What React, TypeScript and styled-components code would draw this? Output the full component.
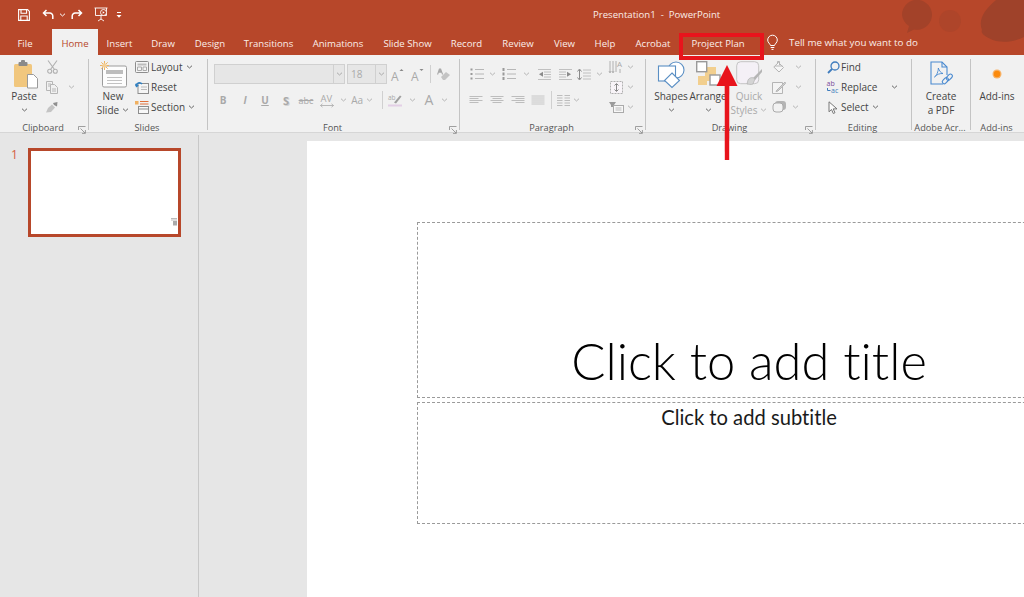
import React from "react";
import styled, { createGlobalStyle } from "styled-components";

const Global = createGlobalStyle`
  html, body { margin: 0; padding: 0; background: #e6e6e6; }
  body { font-family: "Open Sans", "Noto Sans", sans-serif; }
  svg { display: block; flex-shrink: 0; overflow: visible; }
`;

const Window = styled.div`
  position: relative; width: 1024px; height: 597px; overflow: hidden;
  display: flex; flex-direction: column; background: #e6e6e6;
`;
const Chrome = styled.header`
  position: relative; height: 55px; flex-shrink: 0; background: #b7472a; color: #fff; overflow: hidden;
`;
const Texture = styled.svg`
  position: absolute; right: 0; top: 0; pointer-events: none;
`;
const TitleBar = styled.div`
  position: relative; height: 29px; display: flex; align-items: center;
`;
const Qat = styled.div`
  width: 593px; display: flex; align-items: center; flex-shrink: 0;
`;
const QatCell = styled.div<{ $w: number }>`
  width: ${p => p.$w}px; height: 16px; display: flex; align-items: center; justify-content: center; flex-shrink: 0;
`;
const Title = styled.div`
  font-size: 9.6px; color: #fbeee9; white-space: pre;
`;
const TabBar = styled.nav`
  position: relative; height: 26px; display: flex; align-items: stretch;
`;
const Tab = styled.div<{ $w: number; $ml?: number; $active?: boolean }>`
  width: ${p => p.$w}px; margin-left: ${p => p.$ml ?? 0}px; flex-shrink: 0; display: flex; align-items: center; justify-content: center;
  font-size: 9.6px; white-space: nowrap; padding-top: 2px; box-sizing: border-box;
  background: ${p => (p.$active ? "#f1f1f1" : "transparent")};
  color: ${p => (p.$active ? "#b7472a" : "#fbeee9")};
`;
const Tell = styled.div`
  display: flex; align-items: center; gap: 11px; margin-left: 12px; font-size: 9.8px; color: #fbeee9;
`;

const Ribbon = styled.div`
  height: 78px; flex-shrink: 0; display: flex; background: #f1f1f1; border-bottom: 1px solid #d6d6d6;
  box-sizing: border-box; padding-top: 4px; color: #444; font-size: 10px;
`;
const Group = styled.section<{ $w: number; $last?: boolean }>`
  width: ${p => p.$w}px; flex-shrink: 0; box-sizing: border-box; height: 71px; display: flex; flex-direction: column;
  border-right: ${p => (p.$last ? "0" : "1px solid #c4c4c4")};
`;
const Body = styled.div<{ $pl?: number }>`
  flex: 1; min-height: 0; display: flex; align-items: flex-start; padding-left: ${p => p.$pl ?? 0}px;
`;
const GroupFoot = styled.div`
  height: 9px; display: grid; grid-template-columns: 1fr auto 1fr; align-items: center; padding-right: 2px;
`;
const GroupLabel = styled.span`
  grid-column: 2; font-size: 9.2px; line-height: 12px; color: #555; white-space: nowrap; position: relative; top: 1px;
`;
const Launcher = styled.span`
  grid-column: 3; justify-self: end; position: relative; top: 3px;
`;
const BigBtn = styled.div<{ $w: number; $ml?: number; $off?: boolean }>`
  width: ${p => p.$w}px; margin-left: ${p => p.$ml ?? 0}px; flex-shrink: 0; display: flex; flex-direction: column; align-items: center;
  color: ${p => (p.$off ? "#a9a9a9" : "#444")};
`;
const BigIcon = styled.div<{ $pl?: number }>`
  height: 30px; display: flex; align-items: center; justify-content: center; padding-left: ${p => p.$pl ?? 0}px;
`;
const BigLine = styled.div`
  height: 14px; line-height: 14px; display: flex; align-items: center; gap: 3px; white-space: nowrap; font-size: 10px;
`;
const Stack = styled.div<{ $ml?: number }>`
  display: flex; flex-direction: column; gap: 4px; margin-left: ${p => p.$ml ?? 0}px; flex-shrink: 0;
`;
const SmallRow = styled.div`
  height: 16px; display: flex; align-items: center; white-space: nowrap;
`;
const Cell = styled.div<{ $w: number; $off?: boolean }>`
  width: ${p => p.$w}px; flex-shrink: 0; display: flex; align-items: center; justify-content: center; height: 16px;
  color: ${p => (p.$off ? "#a9a9a9" : "#444")};
`;
const Caption = styled.span<{ $ml?: number }>`
  margin-left: ${p => p.$ml ?? 0}px; margin-right: 3px;
`;
const Line = styled.div<{ $ml?: number; $mt?: number }>`
  display: flex; align-items: center; height: 16px; margin-left: ${p => p.$ml ?? 0}px; margin-top: ${p => p.$mt ?? 0}px;
`;
const FieldWrap = styled.div`
  display: flex; margin-top: 5px; align-items: center;
`;
const Field = styled.div<{ $w: number; $ml?: number }>`
  width: ${p => p.$w}px; margin-left: ${p => p.$ml ?? 0}px; height: 20px; box-sizing: border-box; flex-shrink: 0;
  background: #e6e6e6; border: 1px solid #d0d0d0; display: flex; align-items: center; padding-left: 3px;
  font-size: 10px; color: #aaa;
`;
const FieldDrop = styled.div<{ $w: number }>`
  width: ${p => p.$w}px; height: 20px; box-sizing: border-box; flex-shrink: 0; background: #e6e6e6;
  border: 1px solid #d0d0d0; border-left: 0; display: flex; align-items: center; justify-content: center;
`;
const Letter = styled.span<{ $size?: number; $b?: boolean; $i?: boolean; $u?: boolean; $s?: boolean; $shadow?: boolean }>`
  font-size: ${p => p.$size ?? 10}px; font-weight: ${p => (p.$b ? 700 : 400)}; font-style: ${p => (p.$i ? "italic" : "normal")};
  text-decoration: ${p => (p.$u ? "underline" : p.$s ? "line-through" : "none")}; color: #a9a9a9; line-height: 1;
  text-shadow: ${p => (p.$shadow ? "1px 1px 0 #d4d4d4" : "none")};
`;
const Sep = styled.div<{ $w: number }>`
  width: ${p => p.$w}px; height: 18px; flex-shrink: 0; display: flex; justify-content: center;
  &::before { content: ""; width: 1px; background: #d0d0d0; }
`;

const Workspace = styled.main`
  flex: 1; min-height: 0; display: flex;
`;
const ThumbPane = styled.aside`
  width: 199px; flex-shrink: 0; box-sizing: border-box; border-right: 1px solid #c8c8c8; margin-top: 2px;
  display: flex; align-items: flex-start; padding: 13px 0 0 11px; gap: 13px;
`;
const ThumbNum = styled.span`
  font-size: 12px; color: #d4603f; line-height: 14px; width: 4px;
`;
const Thumb = styled.div`
  width: 153px; height: 89px; box-sizing: border-box; background: #fff; border: 3px solid #b7472a;
  display: flex; align-items: flex-end; justify-content: flex-end; padding: 0 1px 8px 0;
`;
const Stage = styled.div`
  flex: 1; min-width: 0; overflow: hidden; padding: 8px 0 0 108px;
`;
const Slide = styled.div`
  width: 900px; height: 500px; background: #fff; padding: 81px 0 0 110px; box-sizing: border-box;
`;
const Placeholder = styled.div<{ $h: number; $mt?: number; $end?: boolean }>`
  width: 664px; height: ${p => p.$h}px; margin-top: ${p => p.$mt ?? 0}px; box-sizing: border-box;
  border: 1px dashed #9a9a9a; display: flex; justify-content: center;
  align-items: ${p => (p.$end ? "flex-end" : "flex-start")};
  color: #000; font-family: "Lato", sans-serif; white-space: nowrap; font-variant-ligatures: none;
`;
const TitleText = styled.div`
  font-size: 50.7px; font-weight: 300; line-height: 60px; margin-bottom: 6px;
`;
const SubText = styled.div`
  font-size: 20.2px; line-height: 28px; color: #1a1a1a;
`;

const Mark = styled.div`
  position: absolute; left: 679px; top: 33px; width: 85px; height: 27px; box-sizing: border-box;
  border: 4px solid #e8141c; pointer-events: none;
`;
const Arrow = styled.svg`
  position: absolute; left: 712px; top: 62px; pointer-events: none;
`;

const G = "#b0b0b0";
const Chev = ({ c = "#666" }: { c?: string }) => (
  <svg width="7" height="4" viewBox="0 0 7 4"><path d="M1 .7 3.5 3 6 .7" fill="none" stroke={c} strokeWidth="1" /></svg>
);
const Launch = () => (
  <svg width="8" height="8" viewBox="0 0 8 8" fill="none" stroke="#8a8a8a" strokeWidth=".8">
    <path d="M.5 4V.5H7.5M2.5 2.5 7 7M4 7.4h3.4V4" />
  </svg>
);
const Lines = ({ kind }: { kind: "l" | "c" | "r" | "j" }) => {
  const rows = kind === "j" ? [0, 1, 2, 3, 4] : [1, 2, 3, 4];
  return (
    <svg width="14" height="10" viewBox="0 0 14 10" stroke={kind === "j" ? "#bdbdbd" : G} strokeWidth=".8">
      {rows.map(i => {
        const short = i % 2 === 0 && kind !== "j" ? 9 : 13;
        const x = kind === "l" || kind === "j" ? .5 : kind === "c" ? (14 - short) / 2 : 13.5 - short;
        const y = kind === "j" ? i * 2 + 1 : i * 2 - .5;
        return <line key={i} x1={x} x2={x + short} y1={y} y2={y} />;
      })}
    </svg>
  );
};
const ListIcon = ({ num }: { num?: boolean }) => (
  <svg width="14" height="12" viewBox="0 0 14 12" stroke={G} strokeWidth=".9">
    {[1.5, 6, 10.5].map(y => (
      <g key={y}>
        <rect x=".5" y={y - (num ? 1.5 : 1)} width="2" height={num ? 3 : 2} fill="#9a9a9a" stroke="none" />
        <line x1="5" x2="14" y1={y} y2={y} />
      </g>
    ))}
  </svg>
);
const Indent = ({ flip }: { flip?: boolean }) => (
  <svg width="13" height="11" viewBox="0 0 13 11" stroke="#c0c0c0" style={flip ? { transform: "scaleX(-1)" } : undefined}>
    {[.5, 3, 5.5, 8, 10.5].map(y => <line key={y} x1={y === .5 || y === 10.5 ? 0 : 6} x2="13" y1={y} y2={y} />)}
    <path d="M5 2.8v5L1 5.3z" fill="#8a8a8a" stroke="none" />
  </svg>
);
const Save = () => (
  <svg width="12" height="12" viewBox="0 0 12 12" fill="none" stroke="#fff" strokeWidth="1.1">
    <path d="M.6.6h9l1.8 1.8v9H.6z" /><path d="M3 .8v3.4h5.6V.8M2.8 11.2V7h6.4v4.2" />
  </svg>
);
const Undo = ({ flip }: { flip?: boolean }) => (
  <svg width="12" height="11" viewBox="0 0 12 11" fill="none" stroke="#fff" strokeWidth="1.5" style={flip ? { transform: "scaleX(-1)" } : undefined}>
    <path d="M4.5 1 1.5 4l3 3M1.8 4h6a3 3 0 0 1 3 3.2V10" />
  </svg>
);
const Present = () => (
  <svg width="15" height="15" viewBox="0 0 15 15" fill="none" stroke="#fff" strokeWidth=".9">
    <path d="M.5 1h13M1.5 1v7.500h11V1M7 9v3M4 14l3-2 3 2" />
    <circle cx="9.500" cy="5.500" r="3" fill="#b7472a" /><path d="M8.700 4.200v2.600l2-1.300z" fill="#fff" stroke="none" />
  </svg>
);
const QatMore = () => (
  <svg width="6" height="6" viewBox="0 0 6 6" fill="#fff"><rect x="1" y="0" width="4" height="1" /><path d="M.5 3h5L3 5.800z" /></svg>
);
const Paste = () => (
  <svg width="24" height="29" viewBox="0 0 24 29">
    <rect x="0" y="4" width="18" height="23" rx="1.500" fill="#f1c77e" />
    <rect x="4.500" y="2" width="9" height="4" rx="1" fill="#8a8a8a" /><rect x="7" y="0" width="4" height="3" rx="1" fill="#8a8a8a" />
    <path d="M13.500 14.500h6l4 4v9.500h-10z" fill="#fff" stroke="#9a9a9a" />
  </svg>
);
const Scissors = () => (
  <svg width="11" height="14" viewBox="0 0 11 14" fill="none" stroke="#b0b0b0" strokeWidth="1.1">
    <path d="M1 .5 7.500 9.500M10 .5 3.500 9.500" /><circle cx="2.700" cy="11.300" r="2" /><circle cx="8.300" cy="11.300" r="2" />
  </svg>
);
const Copy = () => (
  <svg width="12" height="13" viewBox="0 0 12 13" fill="#f1f1f1" stroke="#b6b6b6">
    <path d="M.5.500h6v9h-6z" /><path d="M4.500 3.500h4l3 3v6h-7z" /><path d="M2 3h3M2 5h2M6 8h4M6 10h4" fill="none" />
  </svg>
);
const Brush = () => (
  <svg width="12" height="11" viewBox="0 0 12 11">
    <path d="M7 1 11.500 0 11 4.500 8 3z" fill="#8f8f8f" /><path d="M6 2.500 9 5.500 5 10 0 10.500 2 6z" fill="#c4c4c4" />
  </svg>
);
const NewSlide = () => (
  <svg width="27" height="27" viewBox="0 0 27 27">
    <rect x="2.500" y="5" width="24" height="21" rx="1.500" fill="#fdfdfd" stroke="#9c9c9c" />
    <rect x="6" y="9" width="17" height="4" fill="#bdbdbd" /><path d="M7 16.500h15M7 19.500h15M7 22.500h15" stroke="#c2c2c2" />
    <g stroke="#eeb463" strokeWidth="1"><path d="M4.500 0v9M0 4.500h9M1.300 1.300l6.400 6.400M7.700 1.300 1.300 7.700" /></g>
    <circle cx="4.500" cy="4.500" r="2.200" fill="#f4cf96" />
  </svg>
);
const LayoutIco = () => (
  <svg width="14" height="12" viewBox="0 0 14 12" fill="none" stroke="#8d8d8d">
    <rect x=".5" y=".5" width="13" height="11" rx="1" fill="#f5f5f5" /><rect x="2.500" y="2.500" width="9" height="2" fill="#bdbdbd" stroke="none" />
    <path d="M2.500 6h4v3.500h-4zM8 6h3.500v3.500H8z" stroke="#aaa" />
  </svg>
);
const ResetIco = () => (
  <svg width="14" height="13" viewBox="0 0 14 13" fill="none">
    <rect x="3" y="2.500" width="10.500" height="10" fill="#f5f5f5" stroke="#8d8d8d" /><path d="M6 6h6M6 8.500h6" stroke="#bbb" />
    <path d="M1 5c.5-3 4-4.500 6-2" stroke="#2f7fc1" strokeWidth="1.500" /><path d="M0 2.500 1 6.500 4 4.800z" fill="#2f7fc1" />
  </svg>
);
const SectionIco = () => (
  <svg width="14" height="14" viewBox="0 0 14 14" fill="none">
    <rect x="0" y="1" width="3.500" height="3.500" fill="#f0b060" /><path d="M5 1.500h8.500M5 4h8.500" stroke="#e0703a" />
    <rect x="3.500" y="6.500" width="10" height="7" fill="#f8f8f8" stroke="#8d8d8d" /><path d="M3.500 9h10" stroke="#8d8d8d" />
  </svg>
);
const Eraser = () => (
  <svg width="13" height="13" viewBox="0 0 13 13">
    <path d="M2 .5h2l2.200 6H5l-.6-1.800H1.800L1.200 6.500H0z" fill="#a9a9a9" /><path d="M4 9l5-5 4 3-5 5H6z" fill="#c4c4c4" />
  </svg>
);
const GrowA = ({ down }: { down?: boolean }) => (
  <svg width="13" height="13" viewBox="0 0 13 13">
    <text x="0" y="12.500" fontSize="12" fontFamily="Open Sans, sans-serif" fill="#a9a9a9">A</text>
    <path d={down ? "M8.500 1h4L10.500 3z" : "M8.500 3h4L10.500 1z"} fill="#888" />
  </svg>
);
const AvIcon = () => (
  <svg width="14" height="15" viewBox="0 0 14 15">
    <text x="0.500" y="9" fontSize="9.500" fontFamily="Open Sans, sans-serif" fill="#a9a9a9">AV</text>
    <path d="M.5 12.500h13M2.500 10.800.5 12.500l2 1.700M11.500 10.800l2 1.700-2 1.700" stroke="#a9a9a9" strokeWidth=".8" fill="none" />
  </svg>
);
const Highlight = () => (
  <svg width="14" height="14" viewBox="0 0 14 14">
    <text x="0" y="6.500" fontSize="6.500" fontFamily="Open Sans, sans-serif" fill="#a9a9a9">ab</text>
    <path d="M6 9.500 12 2.500l1.500 1L8 10.500z" fill="#a0a0a0" /><rect x="0" y="11.500" width="14" height="2" fill="#e3cfe6" />
  </svg>
);
const LineSpace = () => (
  <svg width="14" height="13" viewBox="0 0 14 13" stroke="#c0c0c0" fill="none">
    <path d="M6 2h8M6 5h8M6 8h8M6 11h8" /><path d="M2.500 2v9M.5 3.500l2-2.500 2 2.500M.5 9.500l2 2.500 2-2.500" stroke="#8a8a8a" />
  </svg>
);
const Cols = () => (
  <svg width="13" height="11" viewBox="0 0 13 11" stroke="#bdbdbd">
    {[.5, 3, 5.500, 8, 10.500].map(y => <g key={y}><line x1="0" x2="5.500" y1={y} y2={y} /><line x1="7.500" x2="13" y1={y} y2={y} /></g>)}
  </svg>
);
const TextDir = () => (
  <svg width="14" height="15" viewBox="0 0 14 15" stroke={G} fill="none">
    <path d="M1 1v11M4 1v11M11 9v4M.0 11l1 2 1-2M3 11l1 2 1-2M7 1v11" />
    <text x="8" y="7" fontSize="8" stroke="none" fill="#a9a9a9" fontFamily="Open Sans, sans-serif">A</text>
  </svg>
);
const TextAlign = () => (
  <svg width="13" height="13" viewBox="0 0 13 13" stroke={G} fill="none">
    <rect x=".5" y=".5" width="12" height="12" strokeDasharray="2 1" fill="#f8f4f8" /><path d="M6.500 3v7" stroke="#888" /><path d="M4.500 4.500l2-2 2 2M4.500 8.500l2 2 2-2" stroke="#888" />
  </svg>
);
const SmartArt = () => (
  <svg width="15" height="11" viewBox="0 0 15 11">
    <path d="M0 0h7l-2 3H5v2H2V3z" fill="#9a9a9a" /><rect x="4.500" y="3.500" width="10" height="7" fill="#f7f7f7" stroke="#aaa" />
    <path d="M6.500 6h6M6.500 8h6" stroke="#bbb" />
  </svg>
);
const Shapes = () => (
  <svg width="27" height="27" viewBox="0 0 27 27" fill="#fff" stroke="#5a8fc4" strokeWidth="1.100">
    <circle cx="18" cy="9" r="8" /><rect x=".5" y="5" width="17" height="15" /><path d="M14 12l7.500 7.500L14 26.500 6.500 19.500z" />
  </svg>
);
const Arrange = () => (
  <svg width="25" height="26" viewBox="0 0 25 26">
    <rect x="9" y="6" width="11" height="14" fill="#f2cf8e" /><rect x="2" y="15" width="9" height="9" fill="#f2cf8e" />
    <rect x=".7" y=".7" width="10" height="10" fill="#fff" stroke="#9a9a9a" strokeWidth="1.400" />
    <rect x="14" y="14" width="10" height="10" fill="#fff" stroke="#9a9a9a" strokeWidth="1.400" />
  </svg>
);
const Quick = () => (
  <svg width="27" height="27" viewBox="0 0 27 27">
    <rect x=".7" y=".7" width="22" height="22" rx="4" fill="#f4f0f6" stroke="#c4c4c4" />
    <path d="M17 17 26 8v3l-7 8z" fill="#b5b5b5" /><path d="M12 19c2-3 5-3 7-1l-2 5c-2 1-5 0-6 0z" fill="#d4d4d4" stroke="#aaa" strokeWidth=".6" />
  </svg>
);
const Bucket = () => (
  <svg width="12" height="12" viewBox="0 0 12 12" fill="#f6f6f6" stroke="#b5b5b5">
    <path d="M.8 6 5.500 1.500 10.500 6.500 6 11z" /><path d="M2 5h7.500" /><path d="M4.500 3V.5h2V4" fill="none" />
  </svg>
);
const Pen = () => (
  <svg width="14" height="13" viewBox="0 0 14 13" fill="#f4f4f4" stroke="#b5b5b5"><path d="M.5 1.500h10v11H.5z" /><path d="M5 9l8-8 .5 1.500-7.500 7.500-2 .5z" fill="#d0d0d0" /></svg>
);
const Effect = () => (
  <svg width="13" height="12" viewBox="0 0 13 12"><rect x="2" y="0" width="11" height="9" rx="3" fill="#b4b4b4" /><rect x="0" y="2" width="10" height="9" rx="3" fill="#f2f2f2" stroke="#aaa" /></svg>
);
const Find = () => (
  <svg width="13" height="13" viewBox="0 0 13 13" fill="none" stroke="#3f7cbd" strokeWidth="1.300"><circle cx="8" cy="5" r="4" /><path d="M5 8 1 12" strokeWidth="1.800" /></svg>
);
const Replace = () => (
  <svg width="14" height="14" viewBox="0 0 14 14" fontFamily="Open Sans, sans-serif">
    <text x="0.500" y="6" fontSize="7" fill="#7a4b9a">ab</text>
    <text x="5" y="13" fontSize="7" fill="#3f7cbd">ac</text>
    <path d="M1.500 8v2.500h3" fill="none" stroke="#3f7cbd" />
  </svg>
);
const Select = () => (
  <svg width="10" height="13" viewBox="0 0 10 13" fill="#fbfbfb" stroke="#777"><path d="M1 .8v10l2.500-2.300 1.800 4 1.700-.8-1.800-3.800H9z" /></svg>
);
const Pdf = () => (
  <svg width="24" height="26" viewBox="0 0 24 26" fill="none" stroke="#4a8ad0" strokeWidth="1.100">
    <path d="M14 23H2V1h11l5 5v8" /><path d="M13 1v5h5" />
    <path d="M5.500 16c2-1 4-6 3.800-9 1 3 2.500 4.800 4.700 5.500-3-.2-6.500.9-8.500 3.500z" strokeWidth=".9" />
    <rect x="13" y="18" width="7" height="4" rx="2" transform="rotate(-45 16 20)" /><rect x="17" y="14.500" width="7" height="4" rx="2" transform="rotate(-45 20 16.500)" />
  </svg>
);
const Bulb = () => (
  <svg width="11" height="15" viewBox="0 0 11 15" fill="none" stroke="#fff" strokeWidth="1"><path d="M3.500 10.500C3 8.500.7 7.800.7 5a4.800 4.800 0 0 1 9.600 0c0 2.800-2.300 3.500-2.800 5.500zM3.700 12.500h3.600M4.500 14.400h2" /></svg>
);

const tabs: [string, number][] = [
  ["Insert", 43], ["Draw", 44], ["Design", 50], ["Transitions", 67], ["Animations", 72], ["Slide Show", 67],
  ["Record", 51], ["Review", 52], ["View", 41], ["Help", 40], ["Acrobat", 56], ["Project Plan", 74],
];

export default function App() {
  return (
    <Window>
      <Global />
      <Chrome>
        <Texture width="140" height="55" viewBox="0 0 140 55">
          <path d="M18 15a15 15 0 1 1 12 14.500L23 33l2-7a15 15 0 0 1-7-11z" fill="#a34229" />
          <circle cx="66" cy="21" r="11" fill="#ae452a" />
          <path d="M112 0C100 10 94 20 98 30c-2 3 4 8 14 11 10 2 20 0 28-4V0z" fill="#9f422a" />
        </Texture>
        <TitleBar>
          <Qat>
            <QatCell $w={18} />
            <QatCell $w={12}><Save /></QatCell>
            <QatCell $w={12} />
            <QatCell $w={12}><Undo /></QatCell>
            <QatCell $w={16}><Chev c="#fff" /></QatCell>
            <QatCell $w={14}><Undo flip /></QatCell>
            <QatCell $w={10} />
            <QatCell $w={14}><Present /></QatCell>
            <QatCell $w={22}><QatMore /></QatCell>
          </Qat>
          <Title>Presentation1  -  PowerPoint</Title>
        </TitleBar>
        <TabBar>
          <Tab $w={50}>File</Tab>
          <Tab $w={46} $ml={2} $active>Home</Tab>
          {tabs.map(([t, w]) => <Tab key={t} $w={w}>{t}</Tab>)}
          <Tell><Bulb />Tell me what you want to do</Tell>
        </TabBar>
      </Chrome>

      <Ribbon>
        <Group $w={89}>
          <Body $pl={6}>
            <BigBtn $w={36}>
              <BigIcon $pl={4}><Paste /></BigIcon>
              <BigLine>Paste</BigLine>
              <BigLine><Chev /></BigLine>
            </BigBtn>
            <Stack $ml={4}>
              <SmallRow><Cell $w={12}><Scissors /></Cell></SmallRow>
              <SmallRow><Cell $w={12}><Copy /></Cell><Cell $w={26}><Chev c="#b5b5b5" /></Cell></SmallRow>
              <SmallRow><Cell $w={12}><Brush /></Cell></SmallRow>
            </Stack>
          </Body>
          <GroupFoot><GroupLabel>Clipboard</GroupLabel><Launcher><Launch /></Launcher></GroupFoot>
        </Group>

        <Group $w={119}>
          <Body $pl={6}>
            <BigBtn $w={36}>
              <BigIcon><NewSlide /></BigIcon>
              <BigLine>New</BigLine>
              <BigLine>Slide <Chev /></BigLine>
            </BigBtn>
            <Stack $ml={3}>
              <SmallRow><Cell $w={16}><LayoutIco /></Cell><Caption $ml={1}>Layout</Caption><Chev /></SmallRow>
              <SmallRow><Cell $w={16}><ResetIco /></Cell><Caption $ml={1}>Reset</Caption></SmallRow>
              <SmallRow><Cell $w={16}><SectionIco /></Cell><Caption $ml={1}>Section</Caption><Chev /></SmallRow>
            </Stack>
          </Body>
          <GroupFoot><GroupLabel>Slides</GroupLabel></GroupFoot>
        </Group>

        <Group $w={252}>
          <Body $pl={6}>
            <div>
              <FieldWrap>
                <Field $w={120} />
                <FieldDrop $w={11}><Chev c="#aaa" /></FieldDrop>
                <Field $w={29} $ml={2}>18</Field>
                <FieldDrop $w={11}><Chev c="#aaa" /></FieldDrop>
                <Cell $w={20}><GrowA /></Cell>
                <Cell $w={20}><GrowA down /></Cell>
                <Sep $w={6} />
                <Cell $w={20}><Eraser /></Cell>
              </FieldWrap>
              <Line $mt={8}>
                <Cell $w={18}><Letter $b>B</Letter></Cell>
                <Cell $w={26}><Letter $i $b>I</Letter></Cell>
                <Cell $w={14}><Letter $u $b>U</Letter></Cell>
                <Cell $w={28}><Letter $b $size={11} $shadow>S</Letter></Cell>
                <Cell $w={12}><Letter $s $size={9}>abc</Letter></Cell>
                <Cell $w={30}><AvIcon /></Cell>
                <Cell $w={2}><Chev c="#b5b5b5" /></Cell>
                <Cell $w={36} $off><Letter>Aa</Letter>&nbsp;<Chev c="#b5b5b5" /></Cell>
                <Sep $w={4} />
                <Cell $w={22}><Highlight /></Cell>
                <Cell $w={12}><Chev c="#b5b5b5" /></Cell>
                <Cell $w={22}><Letter $size={14}>A</Letter></Cell>
                <Cell $w={8}><Chev c="#b5b5b5" /></Cell>
              </Line>
            </div>
          </Body>
          <GroupFoot><GroupLabel>Font</GroupLabel><Launcher><Launch /></Launcher></GroupFoot>
        </Group>

        <Group $w={186}>
          <Body>
            <div>
              <Line $ml={8} $mt={7}>
                <Cell $w={18}><ListIcon /></Cell>
                <Cell $w={12}><Chev c="#b5b5b5" /></Cell>
                <Cell $w={22}><ListIcon num /></Cell>
                <Cell $w={12}><Chev c="#b5b5b5" /></Cell>
                <Cell $w={24}><Indent /></Cell>
                <Cell $w={18}><Indent flip /></Cell>
                <Cell $w={20}><LineSpace /></Cell>
                <Cell $w={10}><Chev c="#b5b5b5" /></Cell>
              </Line>
              <Line $ml={6} $mt={10}>
                <Cell $w={20}><Lines kind="l" /></Cell>
                <Cell $w={21}><Lines kind="c" /></Cell>
                <Cell $w={21}><Lines kind="r" /></Cell>
                <Cell $w={20}><Lines kind="j" /></Cell>
                <Sep $w={6} />
                <Cell $w={18}><Cols /></Cell>
                <Cell $w={8}><Chev c="#b5b5b5" /></Cell>
              </Line>
            </div>
            <Stack $ml={4}>
              <SmallRow><Cell $w={16}><TextDir /></Cell><Cell $w={12}><Chev c="#b5b5b5" /></Cell></SmallRow>
              <SmallRow><Cell $w={16}><TextAlign /></Cell><Cell $w={12}><Chev c="#b5b5b5" /></Cell></SmallRow>
              <SmallRow><Cell $w={16}><SmartArt /></Cell><Cell $w={12}><Chev c="#b5b5b5" /></Cell></SmallRow>
            </Stack>
          </Body>
          <GroupFoot><GroupLabel>Paragraph</GroupLabel><Launcher><Launch /></Launcher></GroupFoot>
        </Group>

        <Group $w={170}>
          <Body $pl={8}>
            <BigBtn $w={34}>
              <BigIcon><Shapes /></BigIcon>
              <BigLine>Shapes</BigLine>
              <BigLine><Chev /></BigLine>
            </BigBtn>
            <BigBtn $w={36} $ml={2}>
              <BigIcon><Arrange /></BigIcon>
              <BigLine>Arrange</BigLine>
              <BigLine><Chev /></BigLine>
            </BigBtn>
            <BigBtn $w={38} $ml={4} $off>
              <BigIcon><Quick /></BigIcon>
              <BigLine>Quick</BigLine>
              <BigLine>Styles <Chev c="#b5b5b5" /></BigLine>
            </BigBtn>
            <Stack>
              <SmallRow><Cell $w={22}><Bucket /></Cell><Cell $w={16}><Chev c="#b5b5b5" /></Cell></SmallRow>
              <SmallRow><Cell $w={22}><Pen /></Cell><Cell $w={16}><Chev c="#b5b5b5" /></Cell></SmallRow>
              <SmallRow><Cell $w={22}><Effect /></Cell><Cell $w={10}><Chev c="#b5b5b5" /></Cell></SmallRow>
            </Stack>
          </Body>
          <GroupFoot><GroupLabel>Drawing</GroupLabel><Launcher><Launch /></Launcher></GroupFoot>
        </Group>

        <Group $w={96}>
          <Body $pl={9}>
            <Stack>
              <SmallRow><Cell $w={16}><Find /></Cell><Caption>Find</Caption></SmallRow>
              <SmallRow><Cell $w={16}><Replace /></Cell><Caption>Replace</Caption><Cell $w={28}><Chev /></Cell></SmallRow>
              <SmallRow><Cell $w={16}><Select /></Cell><Caption>Select</Caption><Chev /></SmallRow>
            </Stack>
          </Body>
          <GroupFoot><GroupLabel>Editing</GroupLabel></GroupFoot>
        </Group>

        <Group $w={59}>
          <Body>
            <BigBtn $w={58}>
              <BigIcon><Pdf /></BigIcon>
              <BigLine>Create</BigLine>
              <BigLine>a PDF</BigLine>
            </BigBtn>
          </Body>
          <GroupFoot><GroupLabel>Adobe Acr...</GroupLabel></GroupFoot>
        </Group>

        <Group $w={53} $last>
          <Body>
            <BigBtn $w={52}>
              <BigIcon>
                <svg width="10" height="10" viewBox="0 0 10 10"><circle cx="5" cy="5" r="4.500" fill="#f7b267" /><circle cx="5" cy="5" r="3.200" fill="#fb8a0c" /></svg>
              </BigIcon>
              <BigLine>Add-ins</BigLine>
            </BigBtn>
          </Body>
          <GroupFoot><GroupLabel>Add-ins</GroupLabel></GroupFoot>
        </Group>
      </Ribbon>

      <Workspace>
        <ThumbPane>
          <ThumbNum>1</ThumbNum>
          <Thumb>
            <svg width="6" height="8" viewBox="0 0 6 8"><path d="M0 .5h6M0 2h6" stroke="#bbb" /><rect x="2" y="3" width="4" height="4.500" fill="#aaa" /></svg>
          </Thumb>
        </ThumbPane>
        <Stage>
          <Slide>
            <Placeholder $h={176} $end><TitleText>Click to add title</TitleText></Placeholder>
            <Placeholder $h={122} $mt={4}><SubText>Click to add subtitle</SubText></Placeholder>
          </Slide>
        </Stage>
      </Workspace>

      <Mark />
      <Arrow width="30" height="100" viewBox="0 0 30 100">
        <path d="M12.700 22h4.600L17.200 98h-4.400z" fill="#e8141c" />
        <path d="M15 3 25.500 24h-21z" fill="#e8141c" />
      </Arrow>
    </Window>
  );
}
